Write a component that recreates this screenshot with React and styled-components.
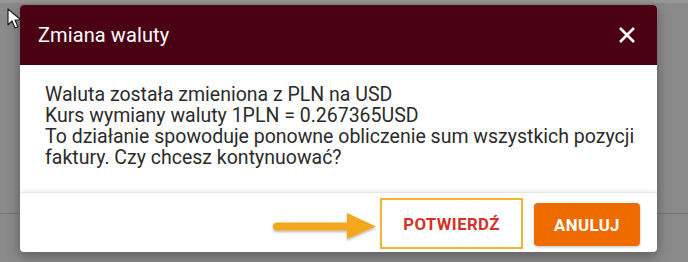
import React from 'react'
import styled, { createGlobalStyle } from 'styled-components'

const GlobalStyle = createGlobalStyle`
  html, body {
    margin: 0;
    padding: 0;
  }
  body {
    width: 688px;
    height: 262px;
    overflow: hidden;
    font-family: Roboto, "Liberation Sans", sans-serif;
    background:
      linear-gradient(to bottom, transparent 213px, #757575 213px, #757575 214px, transparent 214px),
      linear-gradient(to bottom, #979797 0, #979797 3px, #8a8a8a 3px);
  }
`

const Backdrop = styled.div`
  position: relative;
  width: 688px;
  height: 262px;
  padding: 5px 0 0 20px;
  box-sizing: border-box;
`

const Dialog = styled.div`
  width: 637px;
  height: 247px;
  display: flex;
  flex-direction: column;
  background: #fff;
  border-radius: 4px;
  overflow: hidden;
  box-shadow: 0 4px 14px rgba(0, 0, 0, 0.35);
`

const Header = styled.div`
  height: 60px;
  flex-shrink: 0;
  display: flex;
  align-items: center;
  justify-content: space-between;
  padding: 0 18px 0 18px;
  background: #4a0012;
  color: #fff;
`

const Title = styled.h2`
  margin: 0;
  font-size: 20px;
  font-weight: 400;
  letter-spacing: 0.1px;
`

const CloseButton = styled.button`
  border: 0;
  background: transparent;
  padding: 0;
  width: 24px;
  height: 24px;
  display: flex;
  align-items: center;
  justify-content: center;
  color: #fff;
  cursor: pointer;
`

const Body = styled.div`
  flex: 1;
  padding: 19px 25px;
  color: #2b2b2b;
  font-size: 19.5px;
  line-height: 21px;
`

const Line = styled.div`
  white-space: nowrap;
`

const Footer = styled.div`
  height: 59px;
  flex-shrink: 0;
  display: flex;
  align-items: center;
  justify-content: flex-end;
  padding-right: 17px;
  border-top: 1px solid #e6e6e6;
  box-shadow: 0 -2px 3px rgba(0, 0, 0, 0.05);
`

const Highlight = styled.div`
  width: 143px;
  height: 51px;
  box-sizing: border-box;
  border: 2px solid #f2b233;
  display: flex;
  align-items: center;
  justify-content: center;
  margin: 2px 11px 0 2px;
`

const Button = styled.button`
  border: 0;
  border-radius: 4px;
  font-family: Roboto, "Liberation Sans", sans-serif;
  font-size: 16.8px;
  font-weight: 700;
  letter-spacing: 0.4px;
  text-transform: uppercase;
  white-space: nowrap;
  cursor: pointer;
  background: ${p => (p.$filled ? '#ee6b00' : 'transparent')};
  color: ${p => (p.$filled ? '#fff' : '#d3332b')};
  height: ${p => (p.$filled ? '43px' : '38px')};
  padding: 0 ${p => (p.$filled ? '0' : '8px')};
  box-shadow: ${p => (p.$filled ? '0 1px 3px rgba(0,0,0,0.25)' : 'none')};
  width: ${p => (p.$filled ? '106px' : 'auto')};
  margin-top: ${p => (p.$filled ? '4px' : '0')};
`

const Cursor = styled.svg`
  position: absolute;
  left: 7px;
  top: 8px;
`

function Arrow() {
  return (
    <svg width="108" height="30" viewBox="0 0 108 30" style={{ marginTop: '6px' }}>
      <defs>
        <filter id="ash" x="-10%" y="-30%" width="120%" height="170%">
          <feDropShadow dx="0" dy="1.5" stdDeviation="1.2" floodColor="#000" floodOpacity="0.3" />
        </filter>
      </defs>
      <g filter="url(#ash)" fill="#f2a71b">
        <rect x="3" y="11.5" width="78" height="8" rx="4" />
        <polygon points="77,2 106,15.5 77,28" />
      </g>
    </svg>
  )
}

export default function App() {
  return (
    <>
      <GlobalStyle />
      <Backdrop>
        <Dialog>
          <Header>
            <Title>Zmiana waluty</Title>
            <CloseButton aria-label="close">
              <svg width="18" height="18" viewBox="0 0 18 18">
                <path d="M2 2 L16 16 M16 2 L2 16" stroke="#fff" strokeWidth="2.6" />
              </svg>
            </CloseButton>
          </Header>
          <Body>
            <Line>Waluta została zmieniona z PLN na USD</Line>
            <Line>Kurs wymiany waluty 1PLN = 0.267365USD</Line>
            <Line>To działanie spowoduje ponowne obliczenie sum wszystkich pozycji</Line>
            <Line>faktury. Czy chcesz kontynuować?</Line>
          </Body>
          <Footer>
            <Arrow />
            <Highlight>
              <Button>Potwierdź</Button>
            </Highlight>
            <Button $filled>Anuluj</Button>
          </Footer>
        </Dialog>
        <Cursor width="16" height="22" viewBox="0 0 16 22">
          <path d="M1 1 L1 17 L5 13 L8 20 L11 19 L8 12 L14 12 Z" fill="#fff" stroke="#222" strokeWidth="1.2" strokeLinejoin="round" />
        </Cursor>
      </Backdrop>
    </>
  )
}
